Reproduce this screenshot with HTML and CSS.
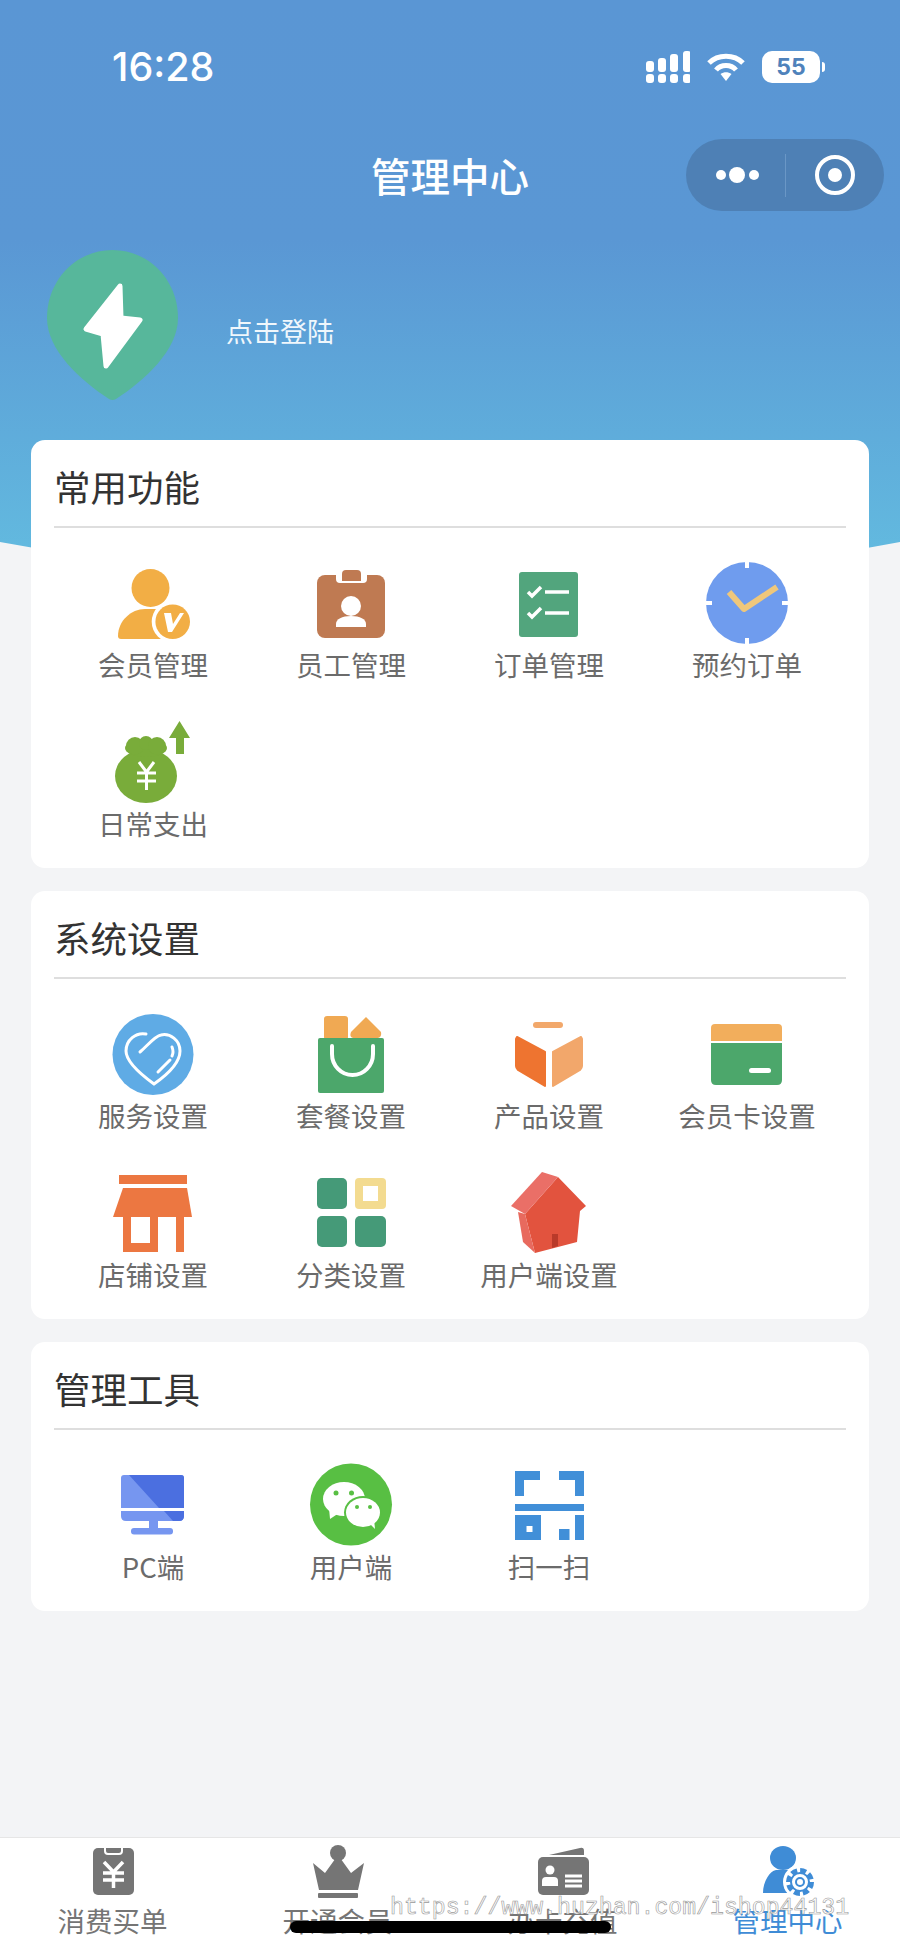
FILE: index.html
```html
<!DOCTYPE html>
<html lang="zh-CN">
<head>
<meta charset="utf-8">
<title>管理中心</title>
<link rel="stylesheet" href="styles.css">
</head>
<body>
<div class="page">
  <header class="hero">
    <div class="status">
      <span class="time">16:28</span>
      <div class="status-icons">
        <svg class="signal" width="44" height="32" viewBox="0 0 44 32" fill="#fff"><rect x="0" y="23" width="8" height="9" rx="3"/><rect x="12" y="23" width="8" height="9" rx="3"/><rect x="24" y="23" width="8" height="9" rx="3"/><rect x="37" y="23" width="8" height="9" rx="3"/><rect x="0" y="10" width="8" height="11" rx="3"/><rect x="12" y="7" width="8" height="14" rx="3"/><rect x="24" y="3" width="8" height="18" rx="3"/><rect x="37" y="0" width="8" height="21" rx="3"/></svg>
        <svg class="wifi" width="38" height="28" viewBox="0 0 38 28" fill="none" stroke="#fff" stroke-width="5"><path d="M2 10 C11 1 27 1 36 10"/><path d="M9 17 C14 11 24 11 29 17"/><path d="M13.500 21 L19 28 L24.500 21 C21 18.500 17 18.500 13.500 21Z" fill="#fff" stroke="none"/></svg>
        <div class="battery"><span class="battery-level">55</span></div>
        <span class="battery-nub"></span>
      </div>
    </div>
    <div class="nav">
      <span></span>
      <h1 class="nav-title">管理中心</h1>
      <div class="capsule">
        <svg width="70" height="20" viewBox="0 0 70 20" fill="#fff"><circle cx="11" cy="10" r="5"/><circle cx="27" cy="10" r="8"/><circle cx="44" cy="10" r="5"/></svg>
        <span class="capsule-sep"></span>
        <svg width="44" height="44" viewBox="0 0 44 44" fill="none"><circle cx="22" cy="22" r="18" stroke="#fff" stroke-width="4"/><circle cx="22" cy="22" r="7" fill="#fff"/></svg>
      </div>
    </div>
    <div class="profile">
      <svg width="131" height="151" viewBox="0 0 131 151"><path d="M65.500 0 C102 0 131 30 131 68 C131 100 98 130 69 149 Q65.500 151 62 149 C33 130 0 100 0 68 C0 30 29 0 65.500 0Z" fill="#57b79b"/><path d="M73 36 L39 79 L56 84 L59 116 L93 70 L74 68Z" fill="#fff" stroke="#fff" stroke-width="5" stroke-linejoin="round"/></svg>
      <span class="login">点击登陆</span>
    </div>
  </header>

  <main class="content">
    <section class="card">
      <h2 class="card-title">常用功能</h2>
      <div class="grid">
        <div class="item">
          <svg class="icon" viewBox="0 0 90 84"><g fill="#f2ae45"><circle cx="42.500" cy="26" r="19"/><path d="M10 74 C10 59 23 47 37 47 L55 47 L55 77 L13 77 Q10 77 10 74Z"/><circle cx="64.700" cy="59.700" r="21" fill="#fff"/><circle cx="64.700" cy="59.700" r="17.300"/></g><path d="M56 51 H63 L65 62 L72 51 H76 L64 70 H60Z" fill="#fff"/></svg>
          <span class="label">会员管理</span>
        </div>
        <div class="item">
          <svg class="icon" viewBox="0 0 90 84"><rect x="11" y="13" width="68" height="63" rx="8" fill="#bf7a52"/><path d="M30 11 H61 V17 Q61 21 57 21 H34 Q30 21 30 17Z" fill="#fff"/><path d="M36 19 V12 Q36 8 40 8 H51 Q55 8 55 12 V19Z" fill="#bf7a52"/><circle cx="45" cy="44" r="10" fill="#fff"/><path d="M30 65 V62 C30 57 36 54 45 54 C54 54 60 57 60 62 V65Z" fill="#fff"/></svg>
          <span class="label">员工管理</span>
        </div>
        <div class="item">
          <svg class="icon" viewBox="0 0 90 84"><rect x="15" y="10" width="59" height="65" rx="3" fill="#52a57d"/><g fill="none" stroke="#fff" stroke-width="3.500"><path d="M24 30 L28 34 L37 25"/><path d="M41 30 H65"/><path d="M24 51 L28 55 L37 46"/><path d="M41 51 H65"/></g></svg>
          <span class="label">订单管理</span>
        </div>
        <div class="item">
          <svg class="icon" viewBox="0 0 90 84"><circle cx="45" cy="41" r="41" fill="#6f9cee"/><path d="M45 0 V6 M45 76 V82 M4 41 H10 M80 41 H86" stroke="#fff" stroke-width="4"/><path d="M27 30 L42 47 L75 25" fill="none" stroke="#efc77b" stroke-width="6" stroke-linejoin="round"/></svg>
          <span class="label">预约订单</span>
        </div>
        <div class="item">
          <svg class="icon" viewBox="0 0 90 84"><g fill="#79ac3a"><ellipse cx="38" cy="55" rx="31" ry="27"/><ellipse cx="38" cy="27" rx="21" ry="9"/><circle cx="27" cy="25" r="9"/><circle cx="38" cy="22" r="7"/><circle cx="49" cy="25" r="9"/><path d="M71.500 0 L82 17 H76 V33 H68 V17 H61Z"/></g><path d="M31 41 L38.500 51 L46 41 M38.500 51 V69 M29 52 H48 M29 60 H48" fill="none" stroke="#fff" stroke-width="3"/></svg>
          <span class="label">日常支出</span>
        </div>
      </div>
    </section>

    <section class="card">
      <h2 class="card-title">系统设置</h2>
      <div class="grid">
        <div class="item">
          <svg class="icon" viewBox="0 0 90 84"><circle cx="45" cy="41.500" r="40.500" fill="#5fabe5"/><g fill="none" stroke="#fff" stroke-width="3" stroke-linecap="round"><path d="M38 21 C28 19 18 27 18 38 C18 49 35 63 46 71 C56 64 72 51 72 38 C72 27 62 20 53 22 C47 23 40 32 32 39"/><path d="M50 59 L62 47 M64 43 Q66 39 64 34"/></g></svg>
          <span class="label">服务设置</span>
        </div>
        <div class="item">
          <svg class="icon" viewBox="0 0 90 84"><rect x="18" y="3" width="24" height="24" rx="3" fill="#f0a953"/><path d="M60 4 L75 19 Q76 24 72 25 H47 Q43 24 45 19Z" fill="#f0a953"/><rect x="12" y="25" width="66" height="55" rx="2" fill="#4ca76b"/><path d="M26 33 V41 A20.500 21 0 0 0 67 41 V33" fill="none" stroke="#fff" stroke-width="4" stroke-linecap="round"/></svg>
          <span class="label">套餐设置</span>
        </div>
        <div class="item">
          <svg class="icon" viewBox="0 0 90 84"><rect x="29" y="9" width="30" height="6" rx="3" fill="#f2a86b"/><path d="M13 24 L41 39 V73 L14 57 Q12 55 12 53 V26Z" fill="#ee7430" stroke="#ee7430" stroke-width="2" stroke-linejoin="round"/><path d="M77 24 L49 39 V73 L76 57 Q78 55 78 53 V26Z" fill="#f2a76b" stroke="#f2a76b" stroke-width="2" stroke-linejoin="round"/></svg>
          <span class="label">产品设置</span>
        </div>
        <div class="item">
          <svg class="icon" viewBox="0 0 90 84"><path d="M9 28 V15 Q9 11 13 11 H76 Q80 11 80 15 V28Z" fill="#f2ae5c"/><path d="M9 30 H80 V67 Q80 72 75 72 H14 Q9 72 9 67Z" fill="#4ca76b"/><rect x="47" y="55" width="22" height="5" rx="2.500" fill="#fff"/></svg>
          <span class="label">会员卡设置</span>
        </div>
        <div class="item">
          <svg class="icon" viewBox="0 0 90 84"><g fill="#ec7741"><rect x="11" y="3" width="68" height="9"/><path d="M15 16 H79 L84 45 H5Z"/><path fill-rule="evenodd" d="M15 45 H50 V80 H15Z M23 45 V71 H42 V45Z"/><rect x="68" y="45" width="8" height="35"/></g></svg>
          <span class="label">店铺设置</span>
        </div>
        <div class="item">
          <svg class="icon" viewBox="0 0 90 84"><rect x="11" y="6" width="30" height="31" rx="5" fill="#459a78"/><rect x="49" y="6" width="31" height="31" rx="4" fill="#f3db90"/><rect x="57" y="14" width="15" height="15" fill="#fff"/><rect x="11" y="44" width="30" height="31" rx="5" fill="#459a78"/><rect x="49" y="44" width="31" height="31" rx="5" fill="#459a78"/></svg>
          <span class="label">分类设置</span>
        </div>
        <div class="item">
          <svg class="icon" viewBox="0 0 90 84"><path d="M21 42 L54 5 L82 34 L76 39 L73 70 L31 81 Z" fill="#e2533e"/><path d="M14 40 L21 42 L31 81 L19 70Z" fill="#e86a5e"/><path d="M7 34 L38 0 L54 5 L21 42Z" fill="#ea6f67"/><path d="M48 62 H54 V74 L48 76Z" fill="#b93a2a"/></svg>
          <span class="label">用户端设置</span>
        </div>
      </div>
    </section>

    <section class="card">
      <h2 class="card-title">管理工具</h2>
      <div class="grid">
        <div class="item">
          <svg class="icon" viewBox="0 0 90 84"><path d="M13 44 V14 Q13 11 16 11 H73 Q76 11 76 14 V44Z" fill="#7696f0"/><path d="M21 11 H73 Q76 11 76 14 V44 H51Z" fill="#4b6fe0"/><path d="M13 47 H76 V52 Q76 57 71 57 H18 Q13 57 13 52Z" fill="#7696f0"/><path d="M56 47 H76 V52 Q76 57 71 57 H65Z" fill="#4b6fe0"/><path d="M41 57 H50 V64 H41Z" fill="#7696f0"/><rect x="23" y="64" width="42" height="6.500" rx="3" fill="#7696f0"/></svg>
          <span class="label">PC端</span>
        </div>
        <div class="item">
          <svg class="icon" viewBox="0 0 90 84"><circle cx="45" cy="40.500" r="41" fill="#58bf43"/><ellipse cx="38" cy="35" rx="21" ry="17" fill="#fff"/><path d="M23 44 L24 55 L33 49Z" fill="#fff"/><ellipse cx="57" cy="48.500" rx="19" ry="16.500" fill="#58bf43"/><ellipse cx="57" cy="48.500" rx="17" ry="14.500" fill="#fff"/><path d="M63 59 L69 65 L68 55Z" fill="#fff"/><g fill="#58bf43"><circle cx="30" cy="29" r="2.500"/><circle cx="45.500" cy="29" r="2.500"/><circle cx="51" cy="43" r="2"/><circle cx="64" cy="43" r="2"/></g></svg>
          <span class="label">用户端</span>
        </div>
        <div class="item">
          <svg class="icon" viewBox="0 0 90 84"><g fill="#418fd8"><path d="M11 7 H36 V16 H20 V32 H11Z"/><path d="M55 7 H80 V32 H71 V16 H55Z"/><rect x="11" y="40" width="69" height="7"/><path fill-rule="evenodd" d="M11 51 H37 V76 H11Z M22.500 62 V68 H28.500 V62Z"/><rect x="71" y="51" width="9" height="25"/><rect x="55" y="65" width="10.500" height="11"/></g></svg>
          <span class="label">扫一扫</span>
        </div>
      </div>
    </section>
  </main>

  <nav class="tabbar">
    <div class="tab">
      <svg class="tab-icon" viewBox="0 0 64 56"><rect x="12" y="5" width="41" height="47" rx="5" fill="#757575"/><path d="M24 4 V8 Q24 11 27 11 H38 Q41 11 41 8 V4" fill="none" stroke="#fff" stroke-width="2"/><path d="M23 19 L32.500 29 L42 19 M32.500 29 V45 M22 30 H43 M22 37 H43" fill="none" stroke="#fff" stroke-width="3.500"/></svg>
      <span class="tab-label">消费买单</span>
    </div>
    <div class="tab">
      <svg class="tab-icon" viewBox="0 0 64 56"><g fill="#757575"><ellipse cx="32" cy="10" rx="8" ry="8"/><path d="M32 12 L45 30 L58 20 L52 47 H13 L7 20 L19 30Z"/><rect x="12" y="50" width="40" height="5" rx="1"/></g></svg>
      <span class="tab-label">开通会员</span>
    </div>
    <div class="tab">
      <svg class="tab-icon" viewBox="0 0 64 56"><g fill="#757575"><rect x="7" y="14" width="51" height="38" rx="5"/><path d="M18 12 L49 5 Q53 4 53 8 V12Z"/></g><g fill="#fff"><circle cx="19" cy="27" r="4.500"/><path d="M11 43 V38 Q11 34 15 34 H23 Q27 34 27 38 V43Z"/><rect x="34" y="31.500" width="17" height="3"/><rect x="34" y="36.500" width="17" height="3"/><rect x="34" y="41.500" width="17" height="3"/></g></svg>
      <span class="tab-label">办卡充值</span>
    </div>
    <div class="tab">
      <svg class="tab-icon" viewBox="0 0 64 56"><g fill="#3f8cd6"><ellipse cx="27" cy="15" rx="13" ry="12"/><path d="M7 50 C7 38 14 28 20 27 H36 C41 30 45 38 46 50Z"/></g><circle cx="44" cy="39" r="17" fill="#fff"/><circle cx="44" cy="39" r="11.500" fill="none" stroke="#3f8cd6" stroke-width="5" stroke-dasharray="6 3"/><circle cx="44" cy="39" r="9" fill="#fff" stroke="#3f8cd6" stroke-width="2"/><circle cx="44" cy="39" r="4" fill="none" stroke="#3f8cd6" stroke-width="2"/></svg>
      <span class="tab-label tab-active">管理中心</span>
    </div>
  </nav>

  <div class="watermark">https://www.huzhan.com/ishop44131</div>
  <div class="home-indicator"></div>
</div>
</body>
</html>
```

FILE: styles.css
```css
* { box-sizing: border-box; }
html, body { margin: 0; padding: 0; }
body { background: #f3f4f6; }
.page {
  position: relative;
  width: 900px;
  height: 1951px;
  display: flex;
  flex-direction: column;
  overflow: hidden;
  background: #f3f4f6;
  font-family: "Noto Sans CJK SC", "Noto Sans", sans-serif;
}
.hero {
  height: 600px;
  background: linear-gradient(180deg, #5a96d4 0, #5a97d4 240px, #62b9df 550px, #66c0e0 600px);
  clip-path: path("M0 0 H900 V542 Q450 627 0 542 Z");
  color: #fff;
  flex: none;
}
.status {
  height: 134px;
  display: flex;
  align-items: center;
  justify-content: space-between;
  padding: 0 75px 0 112px;
}
.time {
  font-family: "Inter", "Liberation Sans", sans-serif;
  font-size: 39.5px;
  font-weight: 500;
}
.status-icons { display: flex; align-items: center; }
.signal { margin-right: 17px; }
.wifi { margin-right: 17px; }
.battery {
  width: 58px;
  height: 32px;
  border-radius: 10px;
  background: #fff;
  display: flex;
  align-items: center;
  justify-content: center;
}
.battery-level {
  font-family: "Inter", "Liberation Sans", sans-serif;
  font-size: 23px;
  font-weight: 700;
  color: #4f82bb;
}
.battery-nub {
  width: 3px;
  height: 10px;
  margin-left: 2px;
  border-radius: 0 3px 3px 0;
  background: #fff;
}
.nav {
  height: 82px;
  display: grid;
  grid-template-columns: 1fr auto 1fr;
  align-items: center;
  padding: 0 16px;
}
.nav-title { margin: 0; font-size: 39.5px; font-weight: 500; line-height: 1; }
.capsule {
  justify-self: end;
  width: 198px;
  height: 72px;
  border-radius: 36px;
  background: #4e80b5;
  display: flex;
  align-items: center;
  padding-left: 24px;
}
.capsule-sep { width: 1px; height: 43px; margin: 0 27px 0 5px; background: #6a97c6; }
.profile {
  display: flex;
  align-items: flex-start;
  gap: 48px;
  padding: 34px 0 0 47px;
}
.login {
  margin-top: 59px;
  font-size: 27px;
  line-height: 44px;
  color: #f0f7fc;
  font-weight: 400;
}
.content {
  margin-top: -160px;
  display: flex;
  flex-direction: column;
  gap: 23px;
  padding: 0 31px;
  position: relative;
}
.card {
  background: #fff;
  border-radius: 14px;
  padding: 0 23px 22px;
}
.card-title {
  margin: 0;
  height: 88px;
  padding-top: 10px;
  border-bottom: 2px solid #dedede;
  font-size: 36.5px;
  font-weight: 400;
  line-height: 74px;
  color: #333;
}
.grid { display: grid; grid-template-columns: repeat(4, 198px); }
.item {
  height: 159px;
  padding-top: 34px;
  display: flex;
  flex-direction: column;
  align-items: center;
}
.icon { width: 90px; height: 84px; flex: none; display: block; overflow: visible; }
.label { margin-top: -2px; font-size: 27.5px; line-height: 40px; color: #6b6b6b; white-space: nowrap; }
.tabbar {
  margin-top: auto;
  height: 114px;
  background: #fff;
  border-top: 1px solid #e6e6e6;
  display: grid;
  grid-template-columns: repeat(4, 225px);
}
.tab { display: flex; flex-direction: column; align-items: center; padding-top: 5px; }
.tab-icon { width: 64px; height: 56px; flex: none; display: block; }
.tab-label { font-size: 27.5px; line-height: 40px; color: #757575; margin-top: 1px; }
.tab-active { color: #3f8cd6; }
.watermark {
  position: absolute;
  left: 390px;
  top: 1893px;
  font-family: "Liberation Mono", monospace;
  font-size: 23.2px;
  line-height: 30px;
  white-space: nowrap;
  color: #fff;
  -webkit-text-stroke: 0.6px #999;
}
.home-indicator {
  position: absolute;
  left: 290px;
  top: 1921px;
  width: 321px;
  height: 12px;
  border-radius: 6px;
  background: #000;
}
```
